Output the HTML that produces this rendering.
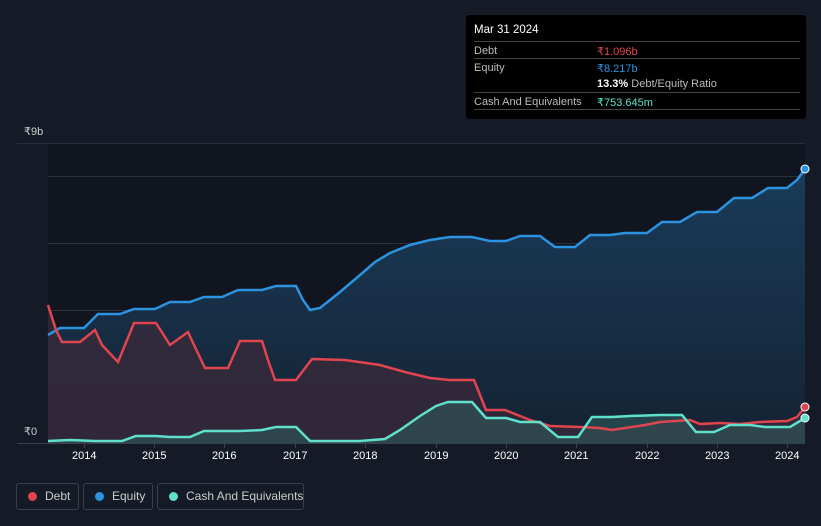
<!DOCTYPE html>
<html><head><meta charset="utf-8"><style>
body{margin:0;width:821px;height:526px;background:#151b26;font-family:"Liberation Sans",sans-serif;overflow:hidden;position:relative}
.tt{position:absolute;left:466px;top:15px;width:340px;height:104px;background:#000;border-radius:3px;color:#bbb;font-size:11px}
.tt .r{position:absolute;left:8px;right:6px;border-top:1px solid #444;height:17px}
.tt .r span{top:3px;white-space:nowrap}
.lg{position:absolute;top:483px;height:27px;border:1px solid #3a3f4a;border-radius:3px;color:#ccc;font-size:12px;box-sizing:border-box;line-height:25px;white-space:nowrap}
.lg i{position:absolute;left:11px;top:8px;width:9px;height:9px;border-radius:50%}
.ax{position:absolute;color:#fff;font-size:11px}
</style></head><body>
<svg width="821" height="526" style="position:absolute;left:0;top:0">
<defs><linearGradient id="eg" x1="0" y1="0" x2="0" y2="1"><stop offset="0" stop-color="#1b3f5e" stop-opacity=".9"/><stop offset="1" stop-color="#142233"/></linearGradient></defs>
<rect x="48" y="143" width="757" height="300" fill="#10151f"/>
<g stroke="#2a303b" stroke-width="1"><line x1="17" y1="143.5" x2="805" y2="143.5"/><line x1="48" y1="176.5" x2="805" y2="176.5"/><line x1="48" y1="243.5" x2="805" y2="243.5"/><line x1="48" y1="310.5" x2="805" y2="310.5"/><line x1="48" y1="376.5" x2="805" y2="376.5"/></g>
<path d="M48,335 L60,328 84,328 98,314 120,314 134,309 155,309 170,302 190,302 204,297 222,297 238,290 262,290 276,286 296,286 303,300 310,310 320,308 340,292 360,275 375,262 390,253 410,245 430,240 450,237 472,237 490,241 506,241 520,236 540,236 555,247 575,247 590,235 610,235 625,233 647,233 662,222 680,222 697,212 717,212 734,198 752,198 768,188 787,188 797,180 805,169 L805,443 48,443Z" fill="url(#eg)"/>
<path d="M48,305 L56,330 62,342 80,342 95,330 102,345 118,362 125,345 134,323 156,323 170,345 188,332 194,345 205,368 228,368 240,341 262,341 268,360 275,380 296,380 312,359 345,360 380,365 405,372 430,378 450,380 474,380 486,410 505,410 530,420 550,426 580,427 600,428 612,430 625,428 645,425 660,422 690,420 700,424 720,423 740,424 760,422 787,421 797,417 805,407 L805,443 48,443Z" fill="#3a2a3a" fill-opacity=".75"/>
<path d="M48,441 L70,440 95,441 122,441 136,436 155,436 170,437 190,437 204,431 240,431 262,430 276,427 296,427 310,441 360,441 385,439 400,430 420,416 436,406 448,402 472,402 486,418 506,418 520,422 540,422 558,437 578,437 592,417 612,417 630,416 660,415 682,415 696,432 714,432 730,425 750,425 765,427 790,427 805,418 L805,443 48,443Z" fill="#2f5a5a" fill-opacity=".6"/>
<path d="M48,335 L60,328 84,328 98,314 120,314 134,309 155,309 170,302 190,302 204,297 222,297 238,290 262,290 276,286 296,286 303,300 310,310 320,308 340,292 360,275 375,262 390,253 410,245 430,240 450,237 472,237 490,241 506,241 520,236 540,236 555,247 575,247 590,235 610,235 625,233 647,233 662,222 680,222 697,212 717,212 734,198 752,198 768,188 787,188 797,180 805,169" fill="none" stroke="#2b93e0" stroke-width="2.5"/>
<path d="M48,305 L56,330 62,342 80,342 95,330 102,345 118,362 125,345 134,323 156,323 170,345 188,332 194,345 205,368 228,368 240,341 262,341 268,360 275,380 296,380 312,359 345,360 380,365 405,372 430,378 450,380 474,380 486,410 505,410 530,420 550,426 580,427 600,428 612,430 625,428 645,425 660,422 690,420 700,424 720,423 740,424 760,422 787,421 797,417 805,407" fill="none" stroke="#e0454f" stroke-width="2.5"/>
<path d="M48,441 L70,440 95,441 122,441 136,436 155,436 170,437 190,437 204,431 240,431 262,430 276,427 296,427 310,441 360,441 385,439 400,430 420,416 436,406 448,402 472,402 486,418 506,418 520,422 540,422 558,437 578,437 592,417 612,417 630,416 660,415 682,415 696,432 714,432 730,425 750,425 765,427 790,427 805,418" fill="none" stroke="#5ee0cc" stroke-width="2.5"/>
<line x1="17" y1="443.5" x2="805" y2="443.5" stroke="#3a404c"/>
<g stroke="#3a404c"><line x1="84.5" y1="443" x2="84.5" y2="448"/><line x1="154.5" y1="443" x2="154.5" y2="448"/><line x1="224.5" y1="443" x2="224.5" y2="448"/><line x1="295.5" y1="443" x2="295.5" y2="448"/><line x1="365.5" y1="443" x2="365.5" y2="448"/><line x1="436.5" y1="443" x2="436.5" y2="448"/><line x1="506.5" y1="443" x2="506.5" y2="448"/><line x1="576.5" y1="443" x2="576.5" y2="448"/><line x1="647.5" y1="443" x2="647.5" y2="448"/><line x1="717.5" y1="443" x2="717.5" y2="448"/><line x1="787.5" y1="443" x2="787.5" y2="448"/></g>
<circle cx="805" cy="169" r="4" fill="#2b93e0" stroke="#fff" stroke-width="1"/>
<circle cx="805" cy="407" r="4" fill="#e0454f" stroke="#fff" stroke-width="1"/>
<circle cx="805" cy="418" r="4" fill="#5ee0cc" stroke="#fff" stroke-width="1"/>
</svg>
<div class="ax" style="left:24px;top:125px;color:#ccc">₹9b</div>
<div class="ax" style="left:24px;top:425px;color:#ccc">₹0</div>
<div class="ax" style="left:72px;top:450px">2014</div><div class="ax" style="left:142px;top:450px">2015</div><div class="ax" style="left:212px;top:450px">2016</div><div class="ax" style="left:283px;top:450px">2017</div><div class="ax" style="left:353px;top:450px">2018</div><div class="ax" style="left:424px;top:450px">2019</div><div class="ax" style="left:494px;top:450px">2020</div><div class="ax" style="left:564px;top:450px">2021</div><div class="ax" style="left:635px;top:450px">2022</div><div class="ax" style="left:705px;top:450px">2023</div><div class="ax" style="left:775px;top:450px">2024</div>
<div class="tt">
<div style="position:absolute;left:8px;top:9px;color:#fff;font-size:11.5px">Mar 31 2024</div>
<div class="r" style="top:26px"><span style="position:absolute;left:0">Debt</span><span style="position:absolute;left:123px;color:#e0454f">₹1.096b</span></div>
<div class="r" style="top:43px"><span style="position:absolute;left:0">Equity</span><span style="position:absolute;left:123px;color:#2b93e0">₹8.217b</span></div>
<div style="position:absolute;left:131px;top:63px;white-space:nowrap"><b style="color:#fff">13.3%</b> Debt/Equity Ratio</div>
<div class="r" style="top:77px"><span style="position:absolute;left:0">Cash And Equivalents</span><span style="position:absolute;left:123px;color:#5ee0cc">₹753.645m</span></div>
<div class="r" style="top:94px"></div>
</div>
<div class="lg" style="left:16px;width:63px"><i style="background:#e0454f"></i><span style="position:absolute;left:28px">Debt</span></div>
<div class="lg" style="left:83px;width:70px"><i style="background:#2b93e0"></i><span style="position:absolute;left:28px">Equity</span></div>
<div class="lg" style="left:157px;width:147px"><i style="background:#5ee0cc"></i><span style="position:absolute;left:28px">Cash And Equivalents</span></div>
</body></html>
